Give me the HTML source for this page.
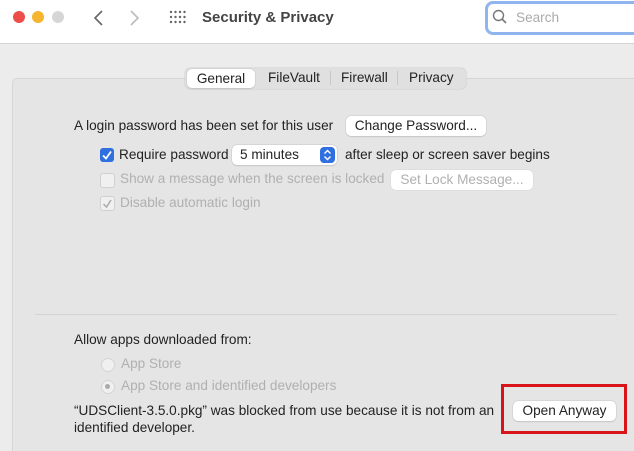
<!DOCTYPE html>
<html><head><style>
html,body{margin:0;width:634px;height:451px;overflow:hidden}
body{background:#ececec;font-family:"Liberation Sans",sans-serif;font-size:13.6px;color:#222;position:relative}
.a{position:absolute;white-space:nowrap}
.tb{position:absolute;left:0;top:0;width:634px;height:43px;background:#fff;border-bottom:1px solid #d4d4d4}
.dot{position:absolute;top:11px;width:12px;height:12px;border-radius:50%}
.box{position:absolute;left:12px;top:78px;width:640px;height:390px;background:#e5e5e5;border:1px solid #d6d6d6;border-radius:5px}
.btn{position:absolute;background:#fff;border-radius:5px;box-shadow:0 0 0 .5px #c8c8c8,0 1px 1px rgba(0,0,0,.15);text-align:center;line-height:20px;height:20px}
.dis{color:#b0b0b0}
</style></head><body>
<div class="tb">
<div class="dot" style="left:13px;background:#ee4e4a"></div>
<div class="dot" style="left:32px;background:#f5b52f"></div>
<div class="dot" style="left:52px;background:#d6d6d6"></div>
<svg class="a" style="left:92px;top:9px" width="14" height="18"><path d="M10 2 L3 9 L10 16" stroke="#666" stroke-width="1.6" fill="none"/></svg>
<svg class="a" style="left:127px;top:9px" width="14" height="18"><path d="M4 2 L11 9 L4 16" stroke="#bbb" stroke-width="1.6" fill="none"/></svg>
<svg class="a" style="left:169px;top:10px" width="18" height="14"><g fill="#666">
<circle cx="2" cy="2" r="1.2"/><circle cx="6.5" cy="2" r="1.2"/><circle cx="11" cy="2" r="1.2"/><circle cx="15.5" cy="2" r="1.2"/>
<circle cx="2" cy="7" r="1.2"/><circle cx="6.5" cy="7" r="1.2"/><circle cx="11" cy="7" r="1.2"/><circle cx="15.5" cy="7" r="1.2"/>
<circle cx="2" cy="12" r="1.2"/><circle cx="6.5" cy="12" r="1.2"/><circle cx="11" cy="12" r="1.2"/><circle cx="15.5" cy="12" r="1.2"/></g></svg>
<div class="a" style="left:202px;top:9px;font-size:15px;font-weight:bold;color:#444">Security &amp; Privacy</div>
<div class="a" style="left:485px;top:1px;width:160px;height:28px;border:3px solid #8fb4ee;border-radius:8px;background:#fff"></div>
<svg class="a" style="left:492px;top:9px" width="16" height="16"><circle cx="6.5" cy="6.5" r="5" stroke="#777" stroke-width="1.4" fill="none"/><path d="M10 10 L14 14" stroke="#777" stroke-width="1.6"/></svg>
<div class="a" style="left:516px;top:10px;color:#aaa">Search</div>
</div>
<div class="box"></div>
<div class="a" style="left:185px;top:68px;width:281px;height:21px;background:#e0e0e0;border-radius:5px;box-shadow:0 0 0 .5px #cfcfcf"></div>
<div class="btn" style="left:187px;top:69px;width:68px;height:19px;line-height:19px">General</div>
<div class="a" style="left:268px;top:70px">FileVault</div>
<div class="a" style="left:330px;top:71px;width:1px;height:14px;background:#c8c8c8"></div>
<div class="a" style="left:341px;top:70px">Firewall</div>
<div class="a" style="left:397px;top:71px;width:1px;height:14px;background:#c8c8c8"></div>
<div class="a" style="left:409px;top:70px">Privacy</div>

<div class="a" style="left:74px;top:118px">A login password has been set for this user</div>
<div class="btn" style="left:346px;top:116px;width:140px">Change Password...</div>
<div class="a" style="left:100px;top:148px;width:14px;height:14px;background:#2f6fe0;border-radius:3px"></div>
<svg class="a" style="left:100px;top:148px" width="14" height="14"><path d="M3 7.5 L6 10.5 L11 3.5" stroke="#fff" stroke-width="1.8" fill="none"/></svg>
<div class="a" style="left:119px;top:147px">Require password</div>
<div class="btn" style="left:232px;top:145px;width:105px"><span style="position:absolute;left:8px">5 minutes</span></div>
<div class="a" style="left:320px;top:147px;width:15px;height:16px;background:#2f6fe0;border-radius:4px"></div>
<svg class="a" style="left:320px;top:147px" width="15" height="16"><path d="M4.5 6.5 L7.5 3.5 L10.5 6.5 M4.5 9.5 L7.5 12.5 L10.5 9.5" stroke="#fff" stroke-width="1.4" fill="none"/></svg>
<div class="a" style="left:345px;top:147px">after sleep or screen saver begins</div>
<div class="a" style="left:100px;top:173px;width:13px;height:13px;border:1px solid #d0d0d0;border-radius:3px;background:#f0f0f0"></div>
<div class="a dis" style="left:120px;top:171px">Show a message when the screen is locked</div>
<div class="btn dis" style="left:391px;top:170px;width:142px;box-shadow:0 0 0 .5px #d8d8d8">Set Lock Message...</div>
<div class="a" style="left:100px;top:196px;width:13px;height:13px;border:1px solid #d0d0d0;border-radius:3px;background:#f0f0f0"></div>
<svg class="a" style="left:100px;top:196px" width="15" height="15"><path d="M3.5 8 L6.5 11 L11 4" stroke="#aaa" stroke-width="1.5" fill="none"/></svg>
<div class="a dis" style="left:120px;top:195px">Disable automatic login</div>

<div class="a" style="left:35px;top:314px;width:582px;height:1px;background:#d4d4d4"></div>
<div class="a" style="left:74px;top:332px">Allow apps downloaded from:</div>
<div class="a" style="left:101px;top:358px;width:12px;height:12px;border:1px solid #d4d4d4;border-radius:50%;background:#f0f0f0"></div>
<div class="a dis" style="left:121px;top:356px">App Store</div>
<div class="a" style="left:101px;top:380px;width:12px;height:12px;border:1px solid #d4d4d4;border-radius:50%;background:#f0f0f0"></div>
<div class="a" style="left:105px;top:384px;width:5px;height:5px;border-radius:50%;background:#aaa"></div>
<div class="a dis" style="left:121px;top:378px">App Store and identified developers</div>
<div class="a" style="left:74px;top:403px">“UDSClient-3.5.0.pkg” was blocked from use because it is not from an</div>
<div class="a" style="left:74px;top:420px">identified developer.</div>
<div class="btn" style="left:513px;top:401px;width:103px">Open Anyway</div>
<div class="a" style="left:501px;top:384px;width:120px;height:44px;border:3px solid #d8141a"></div>
</body></html>
